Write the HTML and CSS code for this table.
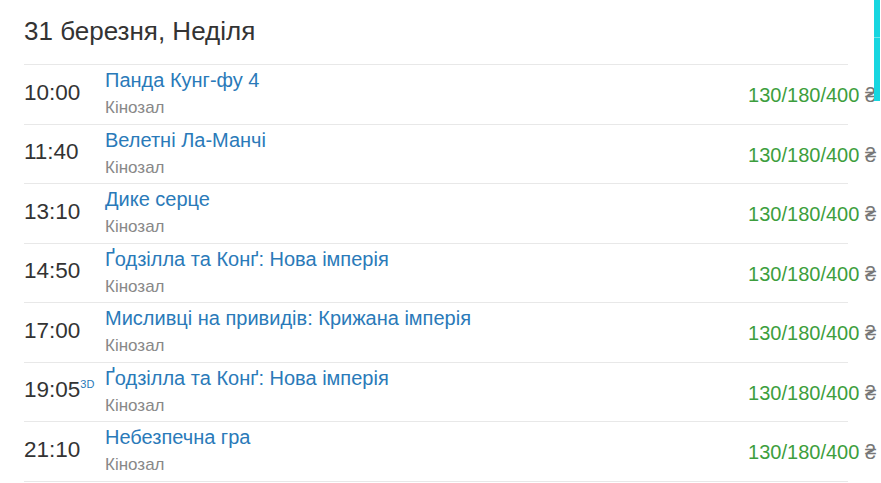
FILE: index.html
```html
<!DOCTYPE html>
<html lang="uk">
<head>
<meta charset="utf-8">
<title>Розклад</title>
<link rel="stylesheet" href="styles.css">
</head>
<body>
<div class="day">
  <h2 class="day-title">31 березня, Неділя</h2>
  <ul class="sessions">
    <li class="session">
      <div class="time">10:00</div>
      <div class="info"><a class="movie" href="#">Панда Кунг-фу 4</a><div class="hall">Кінозал</div></div>
      <div class="price">130/180/400 <span class="cur">₴</span></div>
    </li>
    <li class="session">
      <div class="time">11:40</div>
      <div class="info"><a class="movie" href="#">Велетні Ла-Манчі</a><div class="hall">Кінозал</div></div>
      <div class="price">130/180/400 <span class="cur">₴</span></div>
    </li>
    <li class="session">
      <div class="time">13:10</div>
      <div class="info"><a class="movie" href="#">Дике серце</a><div class="hall">Кінозал</div></div>
      <div class="price">130/180/400 <span class="cur">₴</span></div>
    </li>
    <li class="session">
      <div class="time">14:50</div>
      <div class="info"><a class="movie" href="#">Ґодзілла та Конґ: Нова імперія</a><div class="hall">Кінозал</div></div>
      <div class="price">130/180/400 <span class="cur">₴</span></div>
    </li>
    <li class="session">
      <div class="time">17:00</div>
      <div class="info"><a class="movie" href="#">Мисливці на привидів: Крижана імперія</a><div class="hall">Кінозал</div></div>
      <div class="price">130/180/400 <span class="cur">₴</span></div>
    </li>
    <li class="session">
      <div class="time">19:05<sup class="fmt">3D</sup></div>
      <div class="info"><a class="movie" href="#">Ґодзілла та Конґ: Нова імперія</a><div class="hall">Кінозал</div></div>
      <div class="price">130/180/400 <span class="cur">₴</span></div>
    </li>
    <li class="session">
      <div class="time">21:10</div>
      <div class="info"><a class="movie" href="#">Небезпечна гра</a><div class="hall">Кінозал</div></div>
      <div class="price">130/180/400 <span class="cur">₴</span></div>
    </li>
  </ul>
</div>
<div class="scroll-thumb"></div>
</body>
</html>
```
FILE: styles.css
```css
html, body {
  margin: 0;
  padding: 0;
  background: #fff;
  overflow: hidden;
}
body {
  font-family: "Liberation Sans", Arial, sans-serif;
  color: #333;
}
.day {
  width: 824px;
  padding: 16px 24px 0;
}
.day-title {
  margin: 0 0 18px;
  font-size: 26px;
  font-weight: normal;
  line-height: 30px;
  color: #333;
}
.sessions {
  list-style: none;
  margin: 0;
  padding: 0;
  border-top: 1px solid #e8e8e8;
}
.session {
  display: flex;
  align-items: center;
  height: 58.5px;
  border-bottom: 1px solid #e8e8e8;
}
.time {
  width: 81px;
  flex: none;
  font-size: 22.5px;
  line-height: 26px;
  color: #333;
  padding-bottom: 3px;
}
.fmt {
  font-size: 11px;
  line-height: 12px;
  color: #2a7ab9;
  vertical-align: top;
  position: relative;
  top: 1px;
  margin-left: 0;
}
.info {
  flex: 1;
  display: flex;
  flex-direction: column;
  gap: 7px;
  padding-bottom: 1px;
}
.movie {
  font-size: 20px;
  line-height: 22px;
  color: #2a7ab9;
  text-decoration: none;
}
.hall {
  font-size: 17px;
  line-height: 20px;
  color: #888;
}
.price {
  flex: none;
  margin-right: -28px;
  font-size: 20px;
  line-height: 24px;
  color: #3d9e3d;
  padding-top: 2px;
}
.cur {
  color: #777;
}
.scroll-thumb {
  position: fixed;
  top: 0;
  right: 1px;
  width: 6px;
  height: 101px;
  background: linear-gradient(#17d6e0 0, #17d6e0 37px, #6fe6ec 37px, #6fe6ec 38px, #17d6e0 38px);
}
```
